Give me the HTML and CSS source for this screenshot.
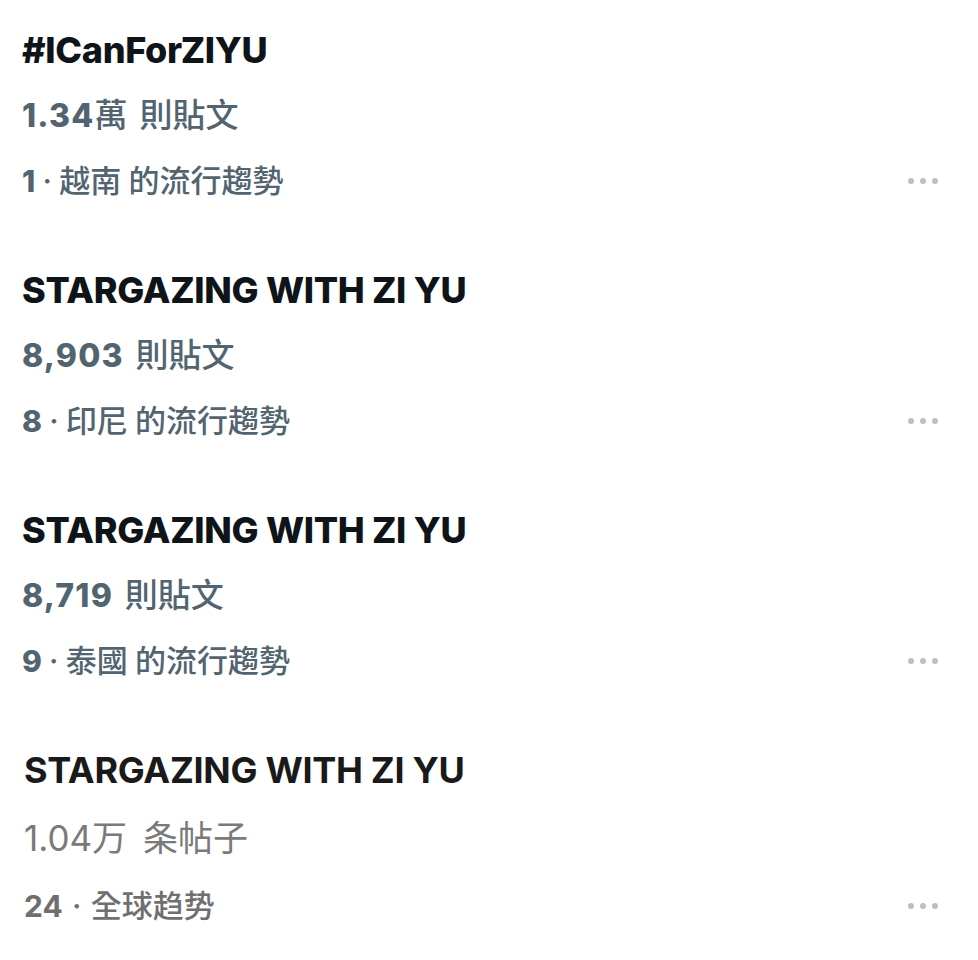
FILE: index.html
```html
<!DOCTYPE html>
<html lang="zh-Hant">
<head>
    <meta charset="UTF-8">
    <title>Trends</title>
    <link rel="stylesheet" href="styles.css">
</head>
<body>
    <div class="trends">
        <div class="trend">
            <div class="title">#ICanForZIYU</div>
            <div class="count"><b>1.34</b>萬 則貼文</div>
            <div class="meta">
                <span><b>1</b> · 越南 的流行趨勢</span>
                <span class="dots"><i></i><i></i><i></i></span>
            </div>
        </div>
        <div class="trend">
            <div class="title">STARGAZING WITH ZI YU</div>
            <div class="count"><b>8,903</b> 則貼文</div>
            <div class="meta">
                <span><b>8</b> · 印尼 的流行趨勢</span>
                <span class="dots"><i></i><i></i><i></i></span>
            </div>
        </div>
        <div class="trend">
            <div class="title">STARGAZING WITH ZI YU</div>
            <div class="count"><b>8,719</b> 則貼文</div>
            <div class="meta">
                <span><b>9</b> · 泰國 的流行趨勢</span>
                <span class="dots"><i></i><i></i><i></i></span>
            </div>
        </div>
        <div class="trend trend-cn">
            <div class="title">STARGAZING WITH ZI YU</div>
            <div class="count">1.04万 条帖子</div>
            <div class="meta">
                <span><b>24</b> · 全球趋势</span>
                <span class="dots"><i></i><i></i><i></i></span>
            </div>
        </div>
    </div>
</body>
</html>
```

FILE: styles.css
```css
body {
    margin: 0;
    background: #ffffff;
    font-family: Inter, "Noto Sans CJK TC", sans-serif;
    color: #0f1419;
}

.trends {
    padding: 18px 40px 0 22px;
    display: flex;
    flex-direction: column;
    gap: 45px;
}

.trend .title,
.trend .count,
.trend .meta {
    height: 65px;
    line-height: 65px;
}

.title {
    font-size: 36px;
    font-weight: 800;
    letter-spacing: -0.3px;
}

.count {
    font-size: 33px;
    color: #536471;
    font-weight: 500;
    word-spacing: 3px;
}

.count b {
    font-size: 32px;
    font-weight: 800;
    letter-spacing: 1.2px;
}

.meta {
    display: flex;
    justify-content: space-between;
    align-items: center;
    font-size: 31px;
    color: #536471;
    font-weight: 500;
}

.meta > span:first-child {
    word-spacing: -1px;
}

.meta b {
    font-size: 30px;
    font-weight: 800;
}

.dots {
    display: flex;
    gap: 6px;
}

.dots i {
    width: 6px;
    height: 6px;
    border-radius: 50%;
    background: #b8c0c6;
}

.trend-cn {
    padding-left: 2px;
    font-family: Inter, "Noto Sans CJK SC", sans-serif;
}

.trend-cn .title {
    font-weight: 700;
    color: #1a1a1a;
}

.trend-cn .count {
    font-size: 35px;
    color: #7a7a7a;
    font-weight: 400;
    height: 70px;
    line-height: 70px;
    word-spacing: 6px;
}

.trend-cn .meta {
    color: #6f6f6f;
}

.trend-cn .meta > span:first-child {
    word-spacing: 1px;
}

.trend-cn .meta b {
    font-weight: 700;
}
```
